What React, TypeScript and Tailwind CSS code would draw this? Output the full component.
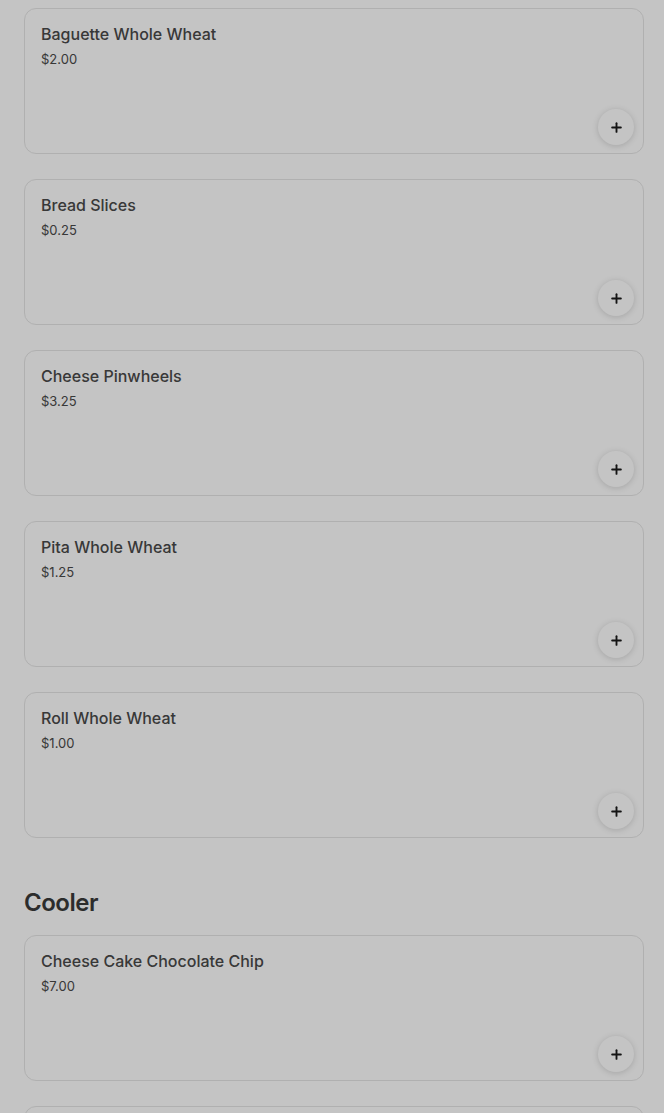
import { FiPlus } from "react-icons/fi";

const bakery = [
  { name: "Baguette Whole Wheat", price: "$2.00" },
  { name: "Bread Slices", price: "$0.25" },
  { name: "Cheese Pinwheels", price: "$3.25" },
  { name: "Pita Whole Wheat", price: "$1.25" },
  { name: "Roll Whole Wheat", price: "$1.00" },
];

const cooler = [
  { name: "Cheese Cake Chocolate Chip", price: "$7.00" },
  { name: "Cheese Cake Plain", price: "$6.50" },
];

function ItemCard({ name, price }: { name: string; price: string }) {
  return (
    <div className="h-[146px] rounded-xl border border-[#e6e6e6] bg-white flex flex-col pl-4 pr-[9px] pt-[13px] pb-2">
      <div className="text-[16px] leading-6 font-medium text-[#4a4a4a]">{name}</div>
      <div className="text-[13px] leading-5 text-[#4a4a4a] mt-[3px]">{price}</div>
      <div className="mt-auto flex justify-end">
        <button className="w-9 h-9 rounded-full bg-white shadow-[0_1px_6px_rgba(0,0,0,0.16)] flex items-center justify-center text-[#1a1a1a]">
          <FiPlus size={15} strokeWidth={3} />
        </button>
      </div>
    </div>
  );
}

export default function App() {
  return (
    <div className="relative min-h-screen bg-white font-['Inter','Noto_Sans',sans-serif]">
      <div className="pl-6 pr-5 pt-2 flex flex-col gap-[25px]">
        {bakery.map((item) => (
          <ItemCard key={item.name} {...item} />
        ))}
      </div>

      <h2 className="pl-6 pr-5 pt-[45px] pb-[12px] text-[24px] leading-10 font-semibold tracking-[-0.5px] text-[#3a3a3a]">
        Cooler
      </h2>

      <div className="pl-6 pr-5 flex flex-col gap-[25px] pb-6">
        {cooler.map((item) => (
          <ItemCard key={item.name} {...item} />
        ))}
      </div>

      {/* modal backdrop */}
      <div className="fixed inset-0 bg-black/[0.23]" />
    </div>
  );
}
